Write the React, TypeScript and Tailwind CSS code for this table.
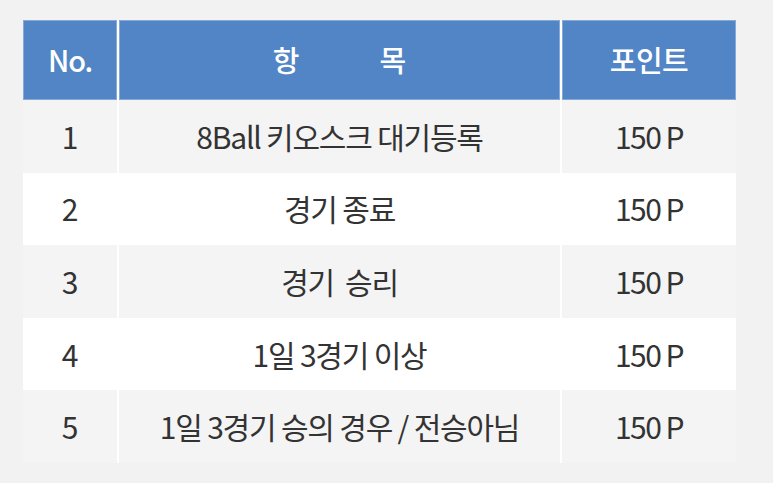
import React from 'react'

const rows = [
  { no: 1, item: '8Ball 키오스크 대기등록', point: '150 P' },
  { no: 2, item: '경기 종료', point: '150 P' },
  { no: 3, item: '경기  승리', point: '150 P' },
  { no: 4, item: '1일 3경기 이상', point: '150 P' },
  { no: 5, item: '1일 3경기 승의 경우 / 전승아님', point: '150 P' },
]

export default function App() {
  return (
    <div
      className="h-[483px] w-[773px] bg-[#f2f2f2] pl-[23px] pt-[20px]"
      style={{ fontFamily: '"Noto Sans CJK KR", "Noto Sans", sans-serif' }}
    >
      <div className="grid w-[713px] grid-cols-[94px_441px_174px] gap-x-[2px] bg-white">
        {/* header */}
        <div className="flex h-[80px] items-center justify-center border border-[#86a9d9] bg-[#5285c5] text-[29px] font-medium tracking-[-0.04em] text-white">
          No.
        </div>
        <div className="flex h-[80px] items-center justify-center gap-[80px] border border-[#86a9d9] bg-[#5285c5] text-[29px] font-medium text-white">
          <span>항</span>
          <span>목</span>
        </div>
        <div className="flex h-[80px] items-center justify-center border border-[#86a9d9] bg-[#5285c5] text-[29px] font-medium tracking-[-0.02em] text-white">
          포인트
        </div>

        {rows.map((r) => {
          const bg = r.no % 2 === 1 ? 'bg-[#f4f4f4]' : 'bg-white'
          return (
            <React.Fragment key={r.no}>
              <div className={`flex h-[72.6px] items-center justify-center ${bg} text-[30px] text-[#333]`}>
                {r.no}
              </div>
              <div
                className={`flex h-[72.6px] items-center justify-center whitespace-pre ${bg} text-[30px] tracking-[-0.04em] text-[#333]`}
              >
                {r.item}
              </div>
              <div className={`flex h-[72.6px] items-center justify-center ${bg} text-[30px] tracking-[-0.05em] text-[#333]`}>
                {r.point}
              </div>
            </React.Fragment>
          )
        })}
      </div>
    </div>
  )
}
